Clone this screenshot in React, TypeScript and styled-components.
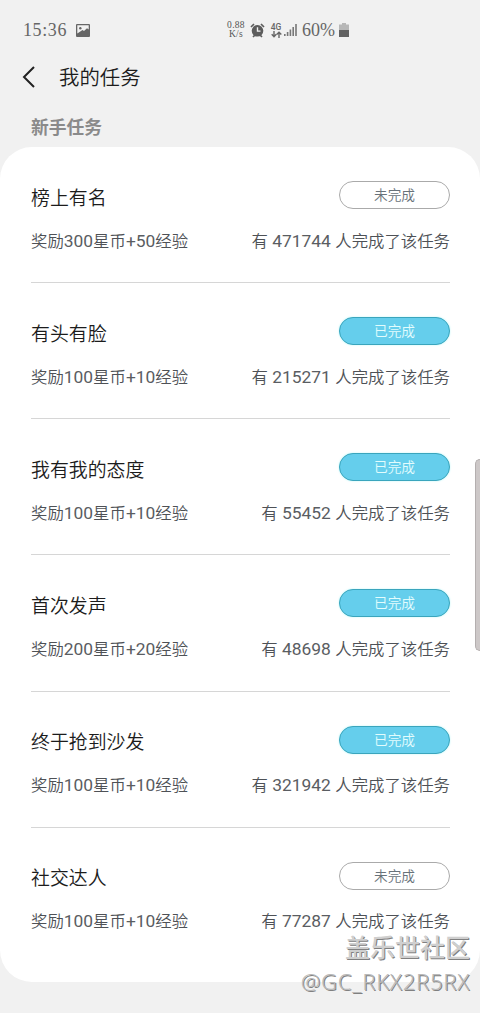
import React from "react";
import styled, { createGlobalStyle, css } from "styled-components";

const Global = createGlobalStyle`
  * { box-sizing: border-box; }
  body {
    margin: 0;
    background: #f1f1f1;
    font-family: Roboto, "Noto Sans CJK SC", sans-serif;
  }
`;

const Screen = styled.div`
  position: relative;
  width: 480px;
  height: 1013px;
  overflow: hidden;
  background: #f1f1f1;
`;

const StatusBar = styled.header`
  display: flex;
  align-items: center;
  height: 44px;
  padding: 16px 0 0 23px;
  color: #666;
  font-family: "Liberation Serif", serif;
`;

const Clock = styled.span`
  width: 53px;
  font-size: 18px;
  line-height: 20px;
  letter-spacing: 0.6px;
`;

const StatusIcons = styled.div`
  display: flex;
  align-items: center;
  margin-left: 136px;
`;

const Speed = styled.div`
  display: flex;
  flex-direction: column;
  align-items: center;
  width: 20px;
  font-size: 9.5px;
  letter-spacing: 0.3px;
  color: #555;
`;

const SpeedLine = styled.span`
  height: 9px;
  line-height: 9px;
`;

const Network = styled.div`
  display: flex;
  flex-direction: column;
  align-items: center;
  width: 12px;
  margin-left: 5px;
  font: 500 8.5px/8px Roboto, sans-serif;
`;

const Percent = styled.span`
  width: 37px;
  margin-left: 5px;
  font-size: 18px;
  line-height: 20px;
`;

const TitleBar = styled.div`
  display: flex;
  align-items: center;
  height: 66px;
  padding-left: 22px;
`;

const PageTitle = styled.h1`
  margin: 2px 0 0 24px;
  font-size: 20.4px;
  font-weight: 350;
  line-height: 28px;
  color: #1c1c1c;
`;

const SectionTitle = styled.h2`
  height: 37px;
  margin: 0;
  padding-left: 31px;
  font-size: 17.8px;
  font-weight: 700;
  line-height: 35px;
  color: #8a8a8a;
`;

const Card = styled.main`
  height: 835px;
  padding: 0 30px 0 31px;
  border-radius: 32px;
  background: #fff;
`;

const Task = styled.section`
  height: 136.15px;
  padding-top: 34px;
  border-bottom: 1px solid #d6d6d6;
  &:last-child { border-bottom: 0; }
`;

const Row = styled.div`
  display: flex;
  justify-content: space-between;
`;

const TaskName = styled.h3`
  margin: 3.5px 0 0.5px;
  font-size: 18.9px;
  font-weight: 350;
  line-height: 28px;
  color: #1c1c1c;
`;

const Status = styled.button<{ $done: boolean }>`
  width: 111px;
  height: 28px;
  padding: 0;
  border: 1px solid #aaa;
  border-radius: 14px;
  background: #fff;
  color: #68727a;
  font: 350 13.7px/26px Roboto, "Noto Sans CJK SC", sans-serif;
  ${(p) =>
    p.$done &&
    css`
      border-color: #3aa5bd;
      background: #65ceec;
      color: #e2fcfd;
      box-shadow: 0 0 2px #b5f5f7;
    `}
`;

const Detail = styled.p`
  margin: 15.5px 0 0;
  font-size: 16.4px;
  font-weight: 350;
  line-height: 24px;
  color: #4e5156;
  white-space: nowrap;
  word-spacing: 0.4px;
`;

const Num = styled.span`
  font-size: 17.4px;
  font-weight: 400;
  color: #5a5d62;
`;

const EdgeHandle = styled.div`
  position: absolute;
  top: 459px;
  right: 0;
  width: 5px;
  height: 192px;
  border: 1px solid #b4afaf;
  border-right: 0;
  border-radius: 5px 0 0 5px;
  background: #cdc8c8;
`;

const Watermark = styled.div`
  position: absolute;
  right: 10px;
  bottom: 16px;
  text-align: right;
  color: #cfcfcf;
  text-shadow: 1px 1px 0 #808080;
`;

const Community = styled.div`
  font-size: 25px;
  font-weight: 500;
  line-height: 34px;
`;

const Author = styled.div`
  margin-top: -1px;
  font: 300 22px/32px "Noto Sans", sans-serif;
  letter-spacing: 0.75px;
  color: #b9b9b9;
`;

const tasks = [
  { name: "榜上有名", coins: 300, exp: 50, count: 471744, done: false },
  { name: "有头有脸", coins: 100, exp: 10, count: 215271, done: true },
  { name: "我有我的态度", coins: 100, exp: 10, count: 55452, done: true },
  { name: "首次发声", coins: 200, exp: 20, count: 48698, done: true },
  { name: "终于抢到沙发", coins: 100, exp: 10, count: 321942, done: true },
  { name: "社交达人", coins: 100, exp: 10, count: 77287, done: false },
];

const PictureIcon = () => (
  <svg width="14" height="13" viewBox="0 0 14 13">
    <rect width="14" height="13" rx="1" fill="#666" />
    <path d="M1.3 1.3h11.4v4.2L11 4.2 8 7 6.5 6 1.3 9.5z" fill="#f1f1f1" />
    <circle cx="4.3" cy="4.2" r="1.2" fill="#666" />
  </svg>
);

const AlarmIcon = () => (
  <svg width="15" height="15" viewBox="0 0 15 15" style={{ marginLeft: 4 }}>
    <path d="M1 4 4 1M14 4 11 1M3 14l2-2M12 14l-2-2" stroke="#5c5c5c" strokeWidth="1.7" />
    <circle cx="7.5" cy="7.8" r="5.8" fill="#5c5c5c" />
    <path d="M7.5 4.3v3.8h3" fill="none" stroke="#f1f1f1" strokeWidth="1.4" />
  </svg>
);

const DataArrows = () => (
  <svg width="11" height="7" viewBox="0 0 11 7" fill="none" stroke="#666" strokeWidth="1.4">
    <path d="M3 0v5.5M.7 3.3 3 5.7l2.3-2.4M8 7V1.3M5.7 3.6 8 1.2l2.3 2.4" />
  </svg>
);

const SignalIcon = () => (
  <svg width="13" height="14" viewBox="0 0 13 14" fill="#777" style={{ marginLeft: 2 }}>
    <path d="M0 11h1.6v2H0zM2.8 9h1.6v4H2.8zM5.6 6.5h1.6V13H5.6zM8.4 4H10v9H8.4zM11.2 1h1.6v12h-1.6z" />
  </svg>
);

const BatteryIcon = () => (
  <svg width="10" height="14" viewBox="0 0 10 14">
    <path d="M3 0h4v1.5h3V7H0V1.5h3z" fill="#b7b7b7" />
    <path d="M0 7h10v7H0z" fill="#626262" />
  </svg>
);

const BackIcon = () => (
  <svg width="13" height="22" viewBox="0 0 13 22" fill="none" stroke="#222" strokeWidth="2">
    <path d="M12 1 2 11l10 10" />
  </svg>
);

export default function App() {
  return (
    <Screen>
      <Global />
      <StatusBar>
        <Clock>15:36</Clock>
        <PictureIcon />
        <StatusIcons>
          <Speed>
            <SpeedLine>0.88</SpeedLine>
            <SpeedLine>K/s</SpeedLine>
          </Speed>
          <AlarmIcon />
          <Network>4G<DataArrows /></Network>
          <SignalIcon />
          <Percent>60%</Percent>
          <BatteryIcon />
        </StatusIcons>
      </StatusBar>
      <TitleBar>
        <BackIcon />
        <PageTitle>我的任务</PageTitle>
      </TitleBar>
      <SectionTitle>新手任务</SectionTitle>
      <Card>
        {tasks.map((t) => (
          <Task key={t.name}>
            <Row>
              <TaskName>{t.name}</TaskName>
              <Status $done={t.done}>{t.done ? "已完成" : "未完成"}</Status>
            </Row>
            <Row>
              <Detail>奖励<Num>{t.coins}</Num>星币<Num>+{t.exp}</Num>经验</Detail>
              <Detail>有 <Num>{t.count}</Num> 人完成了该任务</Detail>
            </Row>
          </Task>
        ))}
      </Card>
      <EdgeHandle />
      <Watermark>
        <Community>盖乐世社区</Community>
        <Author>@GC_RKX2R5RX</Author>
      </Watermark>
    </Screen>
  );
}
